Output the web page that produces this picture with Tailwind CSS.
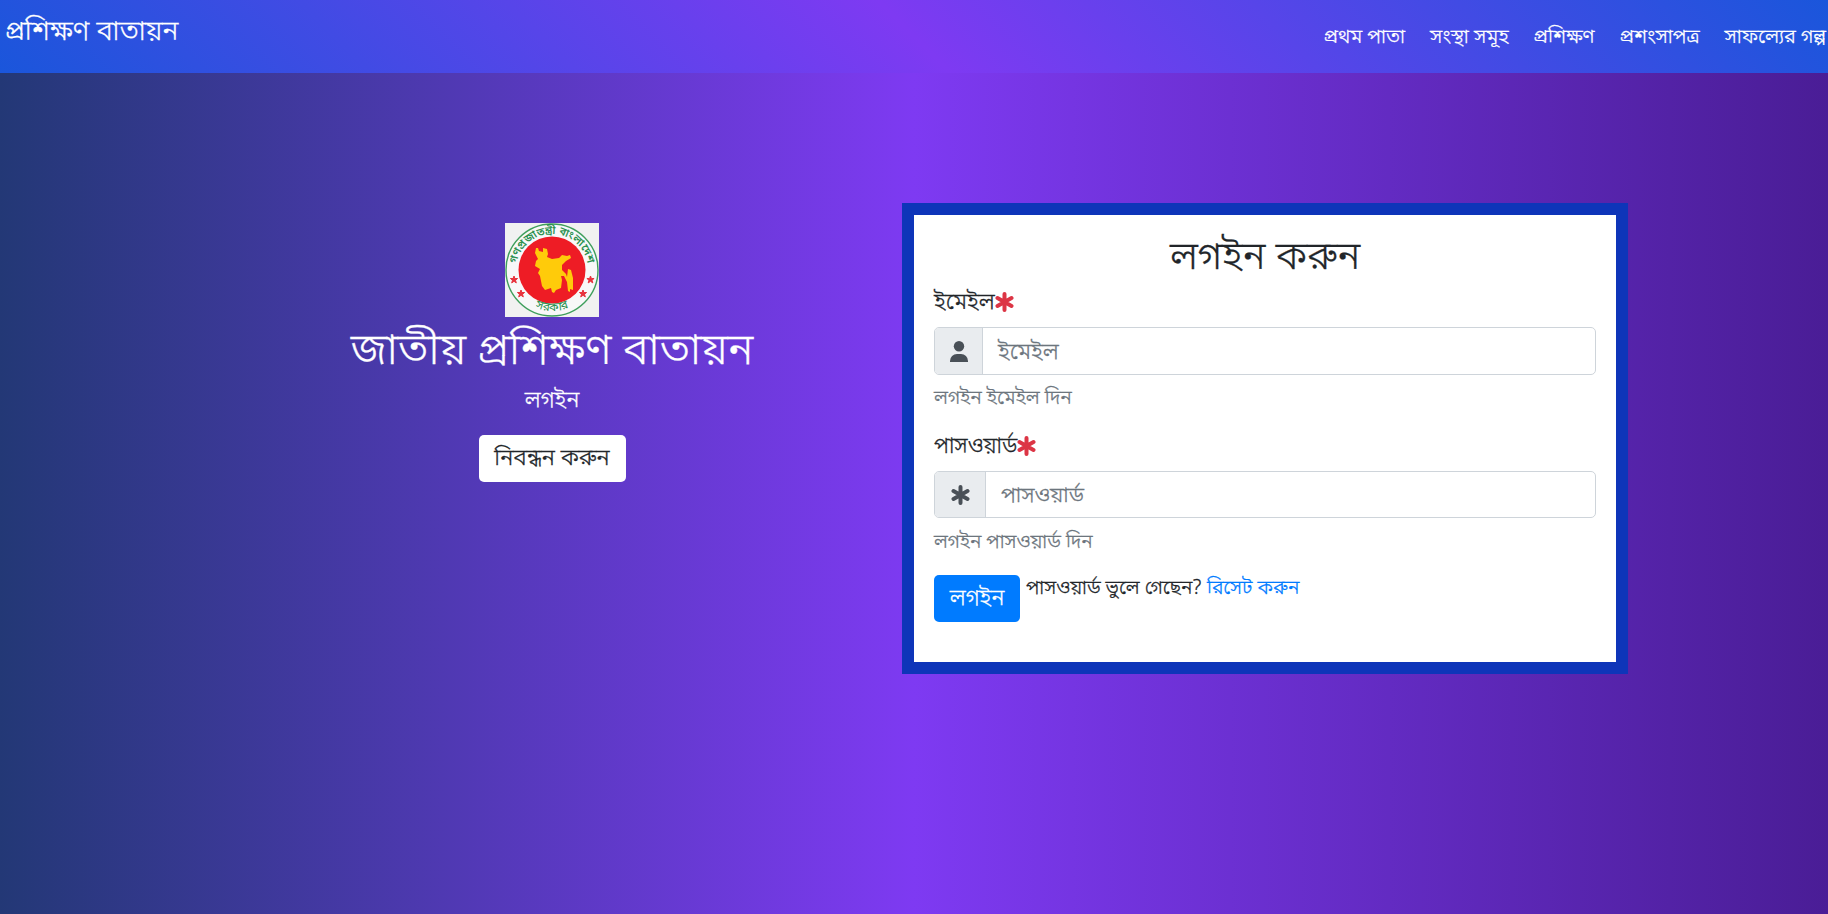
<!DOCTYPE html>
<html lang="bn">
<head>
<meta charset="utf-8">
<title>জাতীয় প্রশিক্ষণ বাতায়ন</title>
<script src="https://cdn.jsdelivr.net/npm/@tailwindcss/browser@4"></script>
</head>
<body class="h-screen overflow-hidden font-['Noto_Sans_Bengali','Noto_Sans',sans-serif] font-[350] [-webkit-text-stroke:0.3px] text-[#212529] bg-[linear-gradient(to_right,#233876,#7e3af2,#4a1d96)] flex flex-col">
  <header class="h-[73px] shrink-0 flex justify-between text-white whitespace-nowrap bg-[linear-gradient(45deg,#1a56db,#7e3af2,#1a56db)]">
    <a href="#" class="pl-[5px] pt-[11px] text-[27.6px] leading-[45px]">প্রশিক্ষণ বাতায়ন</a>
    <nav class="flex gap-[25px] pr-[2px] pt-[20px] text-[20px] leading-[36px]">
      <a href="#">প্রথম পাতা</a>
      <a href="#">সংস্থা সমূহ</a>
      <a href="#">প্রশিক্ষণ</a>
      <a href="#">প্রশংসাপত্র</a>
      <a href="#">সাফল্যের গল্প</a>
    </nav>
  </header>
  <main class="flex pl-[202px] pt-[130px] items-start">
    <section class="w-[700px] flex flex-col items-center text-white pt-5">
      <svg class="w-[94px] h-[94px]" viewBox="0 0 94 94" style="-webkit-text-stroke:0">
        <defs>
          <path id="top" d="M11.500 53a36 36 0 1 1 71 0"/>
          <path id="bottom" d="M5 46a42 42 0 0 0 84 0"/>
        </defs>
        <rect width="94" height="94" fill="#f1f1f1"/>
        <circle cx="47" cy="47" r="46" fill="#f8f8f8" stroke="#3f9f5c" stroke-width="1.4"/>
        <circle cx="47" cy="47" r="33.5" fill="#ee1c25"/>
        <path fill="#ffcb0a" d="M31 25l2 0 1 3 4 1 0-4 4 1 1 5-1 3 5 2 7-1 3-3 5 1 3-1 1 3-5 3-4 4 0 5 4 4 1 3 1-8 3 1 2 8 0 12-3-1 0 3-2-1-1-9-3-6-3 0 1 4-1 8-5 2-2 3-2-1-1-4-6 2-3-4-2-10-2-3 2-4-5-3 1-5 2-2-3-6z"/>
        <g fill="#2b9150">
          <text text-anchor="middle" font-size="11" font-weight="600"><textPath href="#top" startOffset="50%">গণপ্রজাতন্ত্রী বাংলাদেশ</textPath></text>
          <text text-anchor="middle" font-size="12" font-weight="400"><textPath href="#bottom" startOffset="50%">সরকার</textPath></text>
        </g>
        <g fill="#e8323c">
          <path id="star" d="M9 53l.9 2.500h2.700l-2.100 1.700.8 2.700L9 58.300l-2.300 1.600.8-2.700-2.100-1.700h2.700z" stroke="#e8323c"/>
          <use href="#star" x="76.500"/><use href="#star" x="7" y="14"/><use href="#star" x="69" y="14"/>
        </g>
      </svg>
      <h1 class="pt-[7px] text-[43.9px] leading-[59px]">জাতীয় প্রশিক্ষণ বাতায়ন</h1>
      <p class="pt-[1px] text-[22.5px] leading-[35px]">লগইন</p>
      <a href="#" class="mt-4 h-[47px] w-[147px] text-center rounded-[5px] bg-white text-[#212529] text-[22.9px] leading-[49px]">নিবন্ধন করুন</a>
    </section>
    <form class="w-[726px] h-[471px] border-12 border-[#0e35b9] bg-white px-5 pt-4">
      <h2 class="pt-[6px] text-center text-[39.4px] leading-[44px]">লগইন করুন</h2>
      <label class="flex items-center mt-[3px] h-[36px] text-[22.600px]"><span class="pt-[4px]">ইমেইল</span>
        <svg class="w-[19px] h-[20px]" viewBox="0 0 19 20" stroke="#dc3545" stroke-width="4" stroke-linecap="round"><path d="M9.500 2v16M2.500 6l14 8M16.500 6l-14 8"/></svg></label>
      <div class="flex mt-[7px] h-[48px] rounded-[5px] border border-[#ced4da] overflow-hidden text-[22.600px] leading-[50px] text-[#6c757d]">
        <span class="w-[48px] border-r border-[#ced4da] bg-[#e9ecef] flex items-center justify-center"><svg class="w-[18px] h-[21px]" viewBox="0 0 18 21" fill="#495057"><circle cx="9" cy="5.300" r="5.200"/><path d="M0 21v-1a7 7 0 0 1 7-7h4a7 7 0 0 1 7 7v1z"/></svg></span>
        <span class="pl-[15px]">ইমেইল</span>
      </div>
      <p class="mt-[5px] pt-[3px] text-[19.700px] leading-[33px] text-[#6c757d]">লগইন ইমেইল দিন</p>
      <label class="flex items-center mt-3 h-[36px] text-[21.800px]"><span class="pt-[4px]">পাসওয়ার্ড</span>
        <svg class="w-[19px] h-[20px]" viewBox="0 0 19 20" stroke="#dc3545" stroke-width="4" stroke-linecap="round"><path d="M9.500 2v16M2.500 6l14 8M16.500 6l-14 8"/></svg></label>
      <div class="flex mt-[7px] h-[47px] rounded-[5px] border border-[#ced4da] overflow-hidden text-[21.700px] leading-[49px] text-[#6c757d]">
        <span class="w-[51px] border-r border-[#ced4da] bg-[#e9ecef] flex items-center justify-center"><svg class="w-[19px] h-[20px]" viewBox="0 0 19 20" stroke="#495057" stroke-width="4" stroke-linecap="round"><path d="M9.500 2v16M2.500 6l14 8M16.500 6l-14 8"/></svg></span>
        <span class="pl-[15px]">পাসওয়ার্ড</span>
      </div>
      <p class="mt-[5px] pt-[4px] text-[19.500px] leading-[32px] text-[#6c757d]">লগইন পাসওয়ার্ড দিন</p>
      <div class="flex mt-[16px] gap-[6px]">
        <button class="h-[47px] w-[86px] rounded-[5px] bg-[#007bff] text-white text-[22.5px] leading-[49px]">লগইন</button>
        <p class="pt-[2px] text-[19.500px] leading-[24px]">পাসওয়ার্ড ভুলে গেছেন? <a href="#" class="text-[#007bff]">রিসেট করুন</a></p>
      </div>
    </form>
  </main>
</body>
</html>
